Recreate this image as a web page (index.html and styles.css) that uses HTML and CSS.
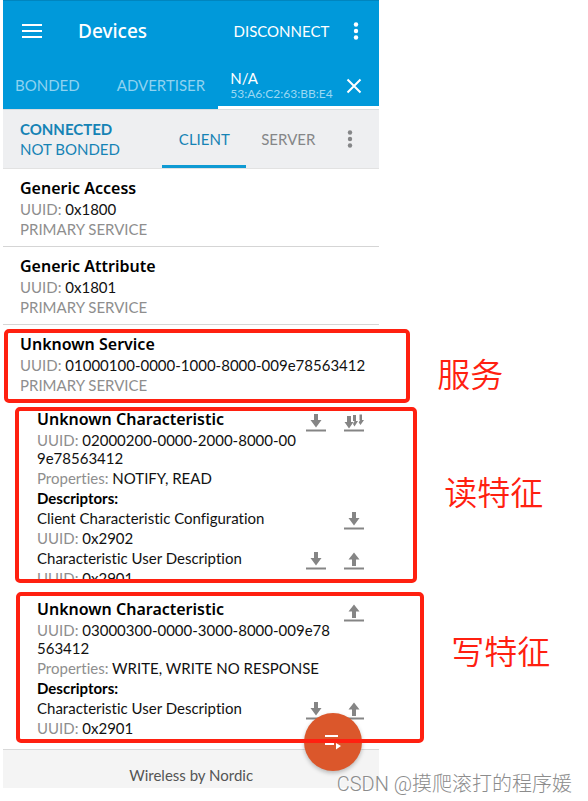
FILE: index.html
```html
<!DOCTYPE html>
<html lang="zh-CN">
<head>
<meta charset="utf-8">
<meta name="viewport" content="width=device-width, initial-scale=1">
<title>Devices</title>
<link rel="stylesheet" href="styles.css">
</head>
<body>
<svg class="defs" aria-hidden="true">
  <symbol id="read" viewBox="0 0 20 18"><path d="M8 0h4v6h3.500l-5.500 7.500L4.500 6H8zM0 15.500h20v2H0z"/></symbol>
  <symbol id="write" viewBox="0 0 20 18"><path d="M8 14V7.500H4.500L10 0.500l5.500 7H12V14zM0 15.500h20v2H0z"/></symbol>
  <symbol id="notify" viewBox="0 0 20 18"><path d="M3 2h4v6h2.500L5 14.500 0.500 8H3zM9 1h3v6h2l-3.500 5.500L9 10l1.500-3H9zM15.500 0.500h2.500V6h2l-3.500 5-1.800-2.500 1.300-2.500h-0.500zM0 15.500h20v2H0z"/></symbol>
  <symbol id="more" viewBox="0 0 6 18"><circle cx="3" cy="2.500" r="2.200"/><circle cx="3" cy="9" r="2.200"/><circle cx="3" cy="15.500" r="2.200"/></symbol>
</svg>
<main class="phone">
  <header class="appbar">
    <div class="toolbar">
      <button class="icon-btn" aria-label="Menu"><svg width="20" height="16" viewBox="0 0 20 16"><path d="M0 2h20M0 8h20M0 14h20" stroke="currentColor" stroke-width="2"/></svg></button>
      <h1>Devices</h1>
      <button class="disconnect">DISCONNECT</button>
      <button class="icon-btn more" aria-label="More options"><svg width="6" height="18"><use href="#more"/></svg></button>
    </div>
    <nav class="tabs">
      <button class="tab bonded">BONDED</button>
      <button class="tab advertiser">ADVERTISER</button>
      <div class="device active">
        <button class="device-name"><span>N/A</span><small>53:A6:C2:63:BB:E4</small></button>
        <button class="icon-btn" aria-label="Close"><svg width="16" height="16" viewBox="0 0 16 16"><path d="M1.500 1.500l13 13M14.500 1.500l-13 13" stroke="currentColor" stroke-width="2"/></svg></button>
      </div>
    </nav>
  </header>
  <div class="status">
    <div class="state"><strong>CONNECTED</strong><span>NOT BONDED</span></div>
    <button class="mode selected">CLIENT</button>
    <button class="mode">SERVER</button>
    <button class="icon-btn" aria-label="Connection options"><svg width="6" height="18"><use href="#more"/></svg></button>
  </div>

  <section class="service">
    <h2>Generic Access</h2>
    <p><span class="key">UUID:</span> 0x1800</p>
    <p class="key">PRIMARY SERVICE</p>
  </section>
  <section class="service">
    <h2>Generic Attribute</h2>
    <p><span class="key">UUID:</span> 0x1801</p>
    <p class="key">PRIMARY SERVICE</p>
  </section>
  <section class="service last">
    <h2>Unknown Service</h2>
    <p><span class="key">UUID:</span> 01000100-0000-1000-8000-009e78563412</p>
    <p class="key">PRIMARY SERVICE</p>
    <div class="mark mark-service"><span>服务</span></div>
  </section>

  <section class="characteristic">
    <div class="row head">
      <div class="info">
        <h2>Unknown Characteristic</h2>
        <p class="uuid"><span class="key">UUID:</span> 02000200-0000-2000-8000-009e78563412</p>
      </div>
      <button class="action" aria-label="Read"><svg><use href="#read"/></svg></button>
      <button class="action" aria-label="Enable notifications"><svg><use href="#notify"/></svg></button>
    </div>
    <p><span class="key">Properties:</span> NOTIFY, READ</p>
    <h3>Descriptors:</h3>
    <div class="row">
      <div class="info">
        <p>Client Characteristic Configuration</p>
        <p><span class="key">UUID:</span> 0x2902</p>
      </div>
      <button class="action" aria-label="Read descriptor"><svg><use href="#read"/></svg></button>
    </div>
    <div class="row">
      <div class="info">
        <p>Characteristic User Description</p>
        <p class="cut"><span class="key">UUID:</span> 0x2901</p>
      </div>
      <button class="action" aria-label="Read descriptor"><svg><use href="#read"/></svg></button>
      <button class="action" aria-label="Write descriptor"><svg><use href="#write"/></svg></button>
    </div>
    <div class="mark mark-read"><span>读特征</span></div>
  </section>

  <section class="characteristic second">
    <div class="row head">
      <div class="info">
        <h2>Unknown Characteristic</h2>
        <p class="uuid"><span class="key">UUID:</span> 03000300-0000-3000-8000-009e78563412</p>
      </div>
      <button class="action" aria-label="Write"><svg><use href="#write"/></svg></button>
    </div>
    <p><span class="key">Properties:</span> WRITE, WRITE NO RESPONSE</p>
    <h3>Descriptors:</h3>
    <div class="row">
      <div class="info">
        <p>Characteristic User Description</p>
        <p><span class="key">UUID:</span> 0x2901</p>
      </div>
      <button class="action" aria-label="Read descriptor"><svg><use href="#read"/></svg></button>
      <button class="action" aria-label="Write descriptor"><svg><use href="#write"/></svg></button>
    </div>
    <div class="mark mark-write"><span>写特征</span></div>
  </section>

  <footer>Wireless by Nordic</footer>
  <button class="fab" aria-label="Macros"><svg width="18" height="16" viewBox="0 0 18 16"><path d="M1 1h13v2H1zM1 9h9v2H1zM12 9l5 3-5 3.500z" fill="currentColor"/></svg></button>
</main>
<div class="watermark">CSDN @摸爬滚打的程序媛</div>
</body>
</html>
```
FILE: styles.css
```css
* { box-sizing: border-box; }
body {
  margin: 0;
  position: relative;
  min-height: 100vh;
  background: #fff;
  color: #111;
  font: 15px/18px Lato, "Noto Sans CJK SC", sans-serif;
  font-variant-ligatures: none;
}
h1, h2, h3, p { margin: 0; }
button {
  border: 0;
  padding: 0;
  background: none;
  color: inherit;
  font: inherit;
}
svg { display: block; fill: currentColor; }
.defs { position: absolute; width: 0; height: 0; }
.phone {
  position: relative;
  width: 64%;
  min-width: 376px;
  margin-left: 3px;
}
.key { color: #8e8e8e; }

.appbar {
  background: #0099da;
  color: #fff;
  border-top: 1px solid #0085be;
}
.toolbar {
  display: flex;
  align-items: center;
  height: 60px;
  padding: 0 20px 0 19px;
}
.toolbar h1 {
  flex: 1;
  margin-left: 36px;
  font: 500 19px/24px "Noto Sans", sans-serif;
}
.toolbar .more { margin-left: 24px; }
.tabs { display: flex; height: 48px; }
.tab { color: #8fd2f0; }
.bonded { padding: 0 12px; }
.advertiser { flex: 1; padding-left: 12px; }
.device {
  display: flex;
  align-items: center;
  justify-content: space-between;
  width: 161px;
  padding: 4px 17px 0 12px;
  border-bottom: 3px solid #fff;
}
.device-name { text-align: left; line-height: 15px; }
.device-name span, .device-name small { display: block; }
.device-name small { font-size: 12px; color: #9bd8f3; }

.status {
  display: flex;
  height: 60px;
  padding-left: 17px;
  background: #eeeff1;
  border-top: 1px solid #d9dde0;
  border-bottom: 1px solid #e2e2e2;
  color: #858688;
}
.state {
  flex: 1;
  display: flex;
  flex-direction: column;
  justify-content: center;
  line-height: 20px;
  color: #1583b5;
}
.mode { width: 84px; border-top: 3px solid transparent; border-bottom: 3px solid transparent; }
.mode.selected { color: #1583b5; border-bottom-color: #0f9ad3; }
.status .icon-btn { padding: 0 26px 0 17px; }

h2 { font: 600 16px/20px "Noto Sans", sans-serif; color: #000; }
h3 { font-size: 15px; line-height: 18px; color: #000; }
.service {
  position: relative;
  padding: 8px 8px 7px 17px;
  border-bottom: 1px solid #d5d5d5;
}
.service h2 { line-height: 22px; }
.service p { line-height: 20px; }
.service.last { padding-bottom: 14px; border-bottom: 0; }

.characteristic {
  position: relative;
  display: flex;
  flex-direction: column;
  gap: 2px;
  padding: 0 6px 0 34px;
}
.second { margin-top: 19px; padding-bottom: 12px; }
.row { display: flex; align-items: flex-start; }
.info {
  flex: 1;
  display: flex;
  flex-direction: column;
  gap: 2px;
}
.uuid { word-break: break-all; }
.cut { height: 11px; overflow: hidden; }
.action { width: 38px; padding: 3px 9px 0; color: #858585; }
.head .action { padding-top: 5px; }
.action svg { width: 20px; height: 18px; }

footer {
  height: 39px;
  padding-top: 16px;
  background: #f4f4f4;
  border-top: 1px solid #d9d9d9;
  color: #555;
  text-align: center;
}
.fab {
  position: absolute;
  right: 17px;
  bottom: 17px;
  width: 58px;
  height: 58px;
  display: grid;
  place-items: center;
  border-radius: 50%;
  background: #db572b;
  color: #fff;
  box-shadow: 0 2px 4px rgba(0, 0, 0, .25);
}

/* Red annotation frames drawn over the app */
.mark {
  position: absolute;
  z-index: 2;
  border: 4px solid #ff2010;
  border-radius: 5px;
  color: #ff2010;
  pointer-events: none;
}
.mark span {
  position: absolute;
  left: 100%;
  margin-left: 31px;
  white-space: nowrap;
  font: 350 33px/40px "Noto Sans CJK SC", sans-serif;
}
.mark-service { top: 4px; bottom: 6px; left: 1px; right: -31px; }
.mark-service span { top: 20px; }
.mark-read { top: -2px; bottom: -3px; left: 12px; right: -38px; }
.mark-read span { top: 60px; }
.mark-write { top: -7px; bottom: 6px; left: 13px; right: -45px; }
.mark-write span { top: 34px; }

.watermark {
  position: absolute;
  right: 16px;
  bottom: 5px;
  color: #8c8c8c;
  text-shadow: 1px 1px 0 #fff;
  font: 300 20px/24px Roboto, "Noto Sans CJK SC", sans-serif;
}
```
